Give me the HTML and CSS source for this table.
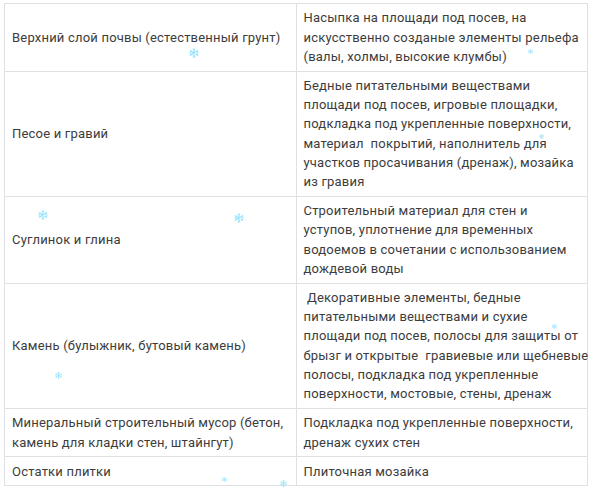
FILE: index.html
```html
<!DOCTYPE html>
<html lang="ru">

<head>
    <meta charset="UTF-8">
    <meta name="viewport" content="width=device-width, initial-scale=1.0">
    <title>Грунты и отходы</title>
    <link rel="stylesheet" href="styles.css">
</head>

<body>
    <svg width="0" height="0" class="defs">
        <symbol id="flake" viewBox="0 0 10 10">
            <g stroke="currentColor" stroke-width="1.1" stroke-linecap="round" fill="none">
                <path d="M5 0.6V9.4M1.2 2.8L8.8 7.2M1.2 7.2L8.8 2.8" />
                <path d="M3.8 1.2L5 2.3L6.2 1.2M3.8 8.8L5 7.7L6.2 8.8M1 4.4L2.5 4.1L2 2.6M9 4.4L7.5 4.1L8 2.6M1 5.6L2.5 5.9L2 7.4M9 5.6L7.5 5.9L8 7.4" stroke-width="0.8" />
            </g>
        </symbol>
    </svg>

    <div class="page">
        <table class="usage">
            <tr>
                <td>Верхний слой почвы (естественный грунт)</td>
                <td class="lines">Насыпка на площади под посев, на<br>искусственно созданые элементы рельефа<br>(валы, холмы, высокие клумбы)</td>
            </tr>
            <tr>
                <td>Песое и гравий</td>
                <td class="lines">Бедные питательными веществами<br>площади под посев, игровые площадки,<br>подкладка под укрепленные поверхности,<br>материал&nbsp; покрытий, наполнитель для<br>участков просачивания (дренаж), мозайка<br>из гравия</td>
            </tr>
            <tr>
                <td>Суглинок и глина</td>
                <td class="lines">Строительный материал для стен и<br>уступов, уплотнение для временных<br>водоемов в сочетании с использованием<br>дождевой воды</td>
            </tr>
            <tr>
                <td>Камень (булыжник, бутовый камень)</td>
                <td class="lines">&nbsp;Декоративные элементы, бедные<br>питательными веществами и сухие<br>площади под посев, полосы для защиты от<br>брызг и открытые&nbsp; гравиевые или щебневые<br>полосы, подкладка под укрепленные<br>поверхности, мостовые, стены, дренаж</td>
            </tr>
            <tr>
                <td>Минеральный строительный мусор (бетон, камень для кладки стен, штайнгут)</td>
                <td class="lines">Подкладка под укрепленные поверхности,<br>дренаж сухих стен</td>
            </tr>
            <tr>
                <td>Остатки плитки</td>
                <td class="lines">Плиточная мозайка</td>
            </tr>
        </table>

        <!-- falling snow -->
        <svg class="flake" style="left: 189px; top: 48px;"><use href="#flake" /></svg>
        <svg class="flake tiny" style="left: 528px; top: 49px;"><use href="#flake" /></svg>
        <svg class="flake tiny" style="left: 539px; top: 134px;"><use href="#flake" /></svg>
        <svg class="flake" style="left: 38px; top: 210px;"><use href="#flake" /></svg>
        <svg class="flake" style="left: 234px; top: 213px;"><use href="#flake" /></svg>
        <svg class="flake tiny" style="left: 552px; top: 324px;"><use href="#flake" /></svg>
        <svg class="flake small" style="left: 55px; top: 372px;"><use href="#flake" /></svg>
        <svg class="flake tiny" style="left: 222px; top: 477px;"><use href="#flake" /></svg>
        <svg class="flake small" style="left: 280px; top: 480px;"><use href="#flake" /></svg>
    </div>
</body>

</html>
```

FILE: styles.css
```css
body {
    margin: 0;
    background: #ffffff;
    font-family: Roboto, "Liberation Sans", sans-serif;
    font-size: 13px;
    color: #3c3c3c;
}

.defs {
    position: absolute;
}

.page {
    position: relative;
    padding: 3px 4px;
}

.usage {
    width: 584px;
    border-collapse: collapse;
    table-layout: fixed;
}

.usage td {
    width: 50%;
    border: 1px solid #dfe0e4;
    padding: 4.4px 2px 4.4px 7px;
    line-height: 19.25px;
    letter-spacing: 0.2px;
    vertical-align: middle;
}

.usage .lines {
    white-space: nowrap;
}

.flake {
    position: absolute;
    width: 10px;
    height: 10px;
    color: #92e2fb;
}

.small {
    width: 7px;
    height: 7px;
}

.tiny {
    width: 5px;
    height: 5px;
}
```
